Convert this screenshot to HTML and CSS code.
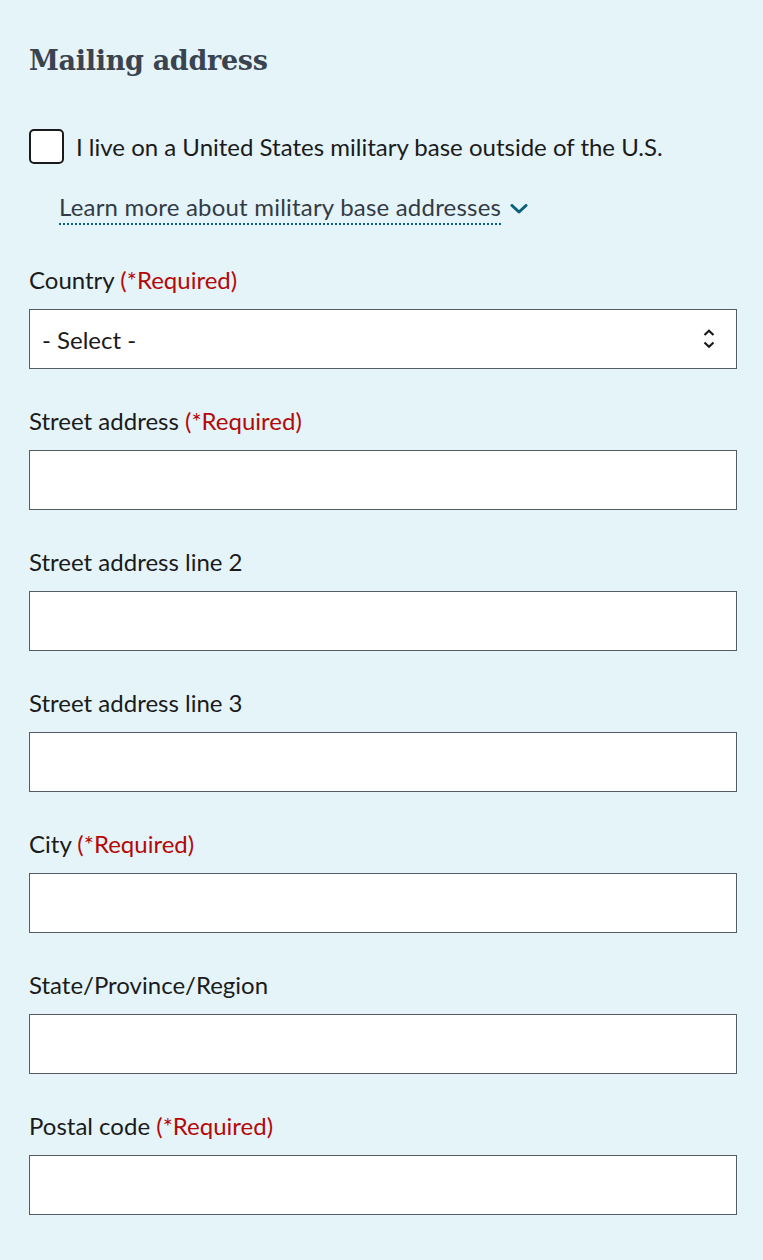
FILE: index.html
```html
<!DOCTYPE html>
<html lang="en">
<head>
<meta charset="utf-8">
<title>Mailing address</title>
<link rel="stylesheet" href="styles.css">
</head>
<body>
<form class="form">
  <h2 class="title">Mailing address</h2>

  <label class="check-row">
    <span class="check-box"></span>
    <span class="check-text">I live on a United States military base outside of the U.S.</span>
  </label>

  <div class="learn-more">
    <span class="learn-text">Learn more about military base addresses</span>
    <svg class="learn-chev" width="18" height="10" viewBox="0 0 18 10" aria-hidden="true">
      <path d="M2 1.5 L9 8 L16 1.5" fill="none" stroke="#0b5f7e" stroke-width="3" stroke-linecap="round" stroke-linejoin="round"/>
    </svg>
  </div>

  <div class="fields">
    <div class="field">
      <label class="field-label">Country <span class="req">(*Required)</span></label>
      <div class="select-wrap">
        <select class="control select"><option>- Select -</option></select>
        <svg class="select-icon" width="12" height="20" viewBox="0 0 12 20" aria-hidden="true">
          <path d="M1.5 6 L6 1.8 L10.5 6" fill="none" stroke="#1b1b1b" stroke-width="2.2"/>
          <path d="M1.5 13.5 L6 17.7 L10.5 13.5" fill="none" stroke="#1b1b1b" stroke-width="2.2"/>
        </svg>
      </div>
    </div>

    <div class="field">
      <label class="field-label">Street address <span class="req">(*Required)</span></label>
      <input class="control" type="text">
    </div>

    <div class="field">
      <label class="field-label">Street address line 2</label>
      <input class="control" type="text">
    </div>

    <div class="field">
      <label class="field-label">Street address line 3</label>
      <input class="control" type="text">
    </div>

    <div class="field">
      <label class="field-label">City <span class="req">(*Required)</span></label>
      <input class="control" type="text">
    </div>

    <div class="field">
      <label class="field-label">State/Province/Region</label>
      <input class="control" type="text">
    </div>

    <div class="field">
      <label class="field-label">Postal code <span class="req">(*Required)</span></label>
      <input class="control" type="text">
    </div>
  </div>
</form>
</body>
</html>
```

FILE: styles.css
```css
html, body {
  margin: 0;
  padding: 0;
}

body {
  background: #e4f4f9;
  color: #1b1b1b;
  font-family: Lato, "Open Sans", sans-serif;
  font-size: 24px;
  line-height: 30px;
}

.form {
  display: flex;
  flex-direction: column;
  padding: 43px 26px 46px 29px;
}

.title {
  margin: 0;
  font-family: "DejaVu Serif", "Liberation Serif", serif;
  font-weight: bold;
  font-size: 27px;
  line-height: 36px;
  color: #3a4350;
  letter-spacing: -0.3px;
}

.check-row {
  display: flex;
  align-items: center;
  gap: 12px;
  margin-top: 50px;
}

.check-box {
  box-sizing: border-box;
  width: 35px;
  height: 35px;
  border: 2.5px solid #1b1b1b;
  border-radius: 5px;
  background: #fff;
  flex: none;
}

.check-text {
  color: #1b1b1b;
}

.learn-more {
  display: flex;
  align-items: center;
  gap: 9px;
  margin-top: 28px;
  margin-left: 30px;
}

.learn-text {
  color: #333b46;
  letter-spacing: 0.2px;
  text-decoration: underline dotted #0b5f7e;
  text-decoration-thickness: 2px;
  text-underline-offset: 7px;
}

.learn-chev {
  display: block;
  margin-top: 3px;
}

.fields {
  display: flex;
  flex-direction: column;
  gap: 38px;
  margin-top: 44px;
}

.field {
  display: flex;
  flex-direction: column;
  gap: 13px;
}

.field-label {
  display: block;
  position: relative;
  top: -1px;
}

.req {
  color: #b50909;
}

.control {
  box-sizing: border-box;
  display: block;
  width: 100%;
  height: 60px;
  margin: 0;
  border: 1px solid #565c65;
  border-radius: 0;
  background: #fff;
  font-family: inherit;
  font-size: 24px;
  color: #1b1b1b;
  padding: 0 12px;
}

.select-wrap {
  position: relative;
}

.select {
  appearance: none;
  -webkit-appearance: none;
  outline: none;
}

.select-icon {
  position: absolute;
  right: 22px;
  top: 20px;
  pointer-events: none;
}
```
